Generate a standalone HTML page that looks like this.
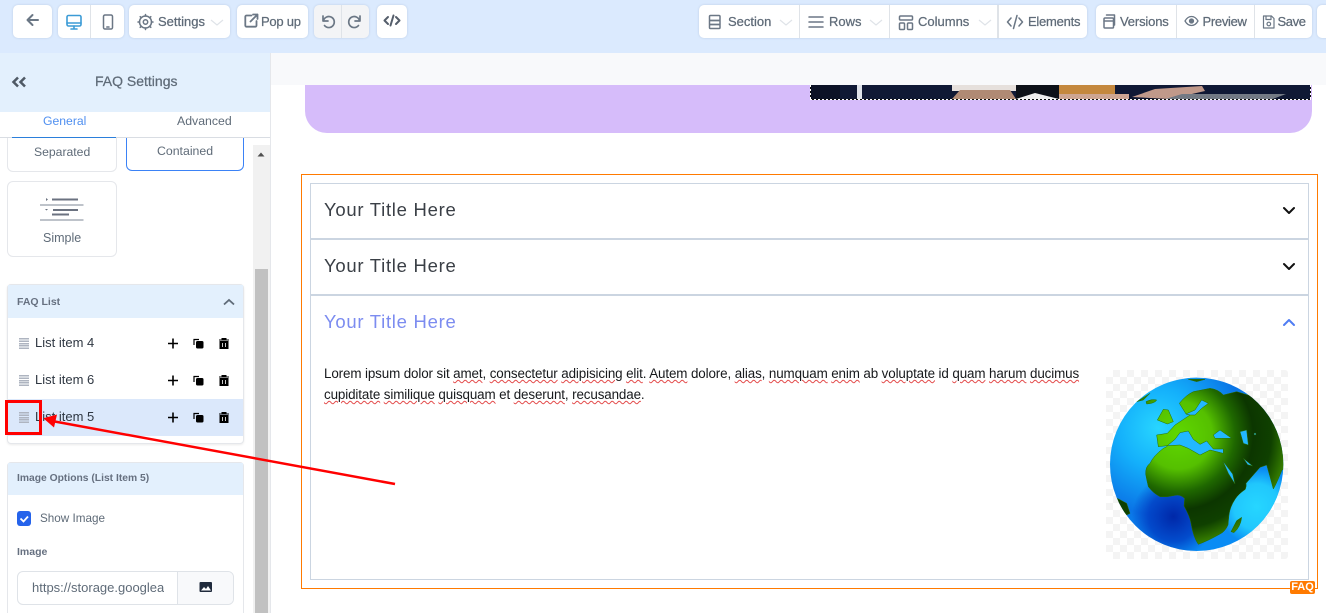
<!DOCTYPE html>
<html><head><meta charset="utf-8"><title>FAQ Settings</title>
<style>
*{box-sizing:border-box}
html,body{margin:0;padding:0;width:1326px;height:613px;overflow:hidden;background:#fff;font-family:"Liberation Sans",sans-serif}
#root{position:relative;width:1326px;height:613px;overflow:hidden;background:#fff}
.a{position:absolute}
.t{position:absolute;white-space:nowrap;line-height:16px;font-size:13px;color:#5f6b78}
.m{-webkit-text-stroke:.25px currentColor}
.btn{position:absolute;top:5px;height:33px;background:#fff;border-radius:5px;box-shadow:0 0 2px rgba(100,120,150,.25)}
.dv{position:absolute;top:5px;height:33px;width:1px;background:#dfe3e8}
svg{position:absolute;overflow:visible}
.ic{fill:none;stroke:#6b7785;stroke-width:1.5;stroke-linecap:round;stroke-linejoin:round}
.card{position:absolute;background:#fff;border:1px solid #e5e7eb;border-radius:6px}
.title{position:absolute;left:324px;font-size:18.5px;line-height:22px;color:#3a3f46;white-space:nowrap;letter-spacing:.72px}
.w{text-decoration:underline wavy #e34a4a 1px;text-underline-offset:1px}
.p{position:absolute;left:324px;font-size:13.4px;line-height:21px;color:#17191c;white-space:nowrap;letter-spacing:-.117px}
.li{position:absolute;left:35px;font-size:13px;line-height:16px;color:#2f3742;white-space:nowrap}
.drag{position:absolute;left:19px;width:10px;height:11px;background:repeating-linear-gradient(#aeb4c0 0 1.5px,transparent 1.5px 2.4px)}
.b{font-weight:bold;color:#667080}
</style></head><body><div id="root">

<!-- toolbar bg -->
<div class="a" style="left:0;top:0;width:1326px;height:53px;background:#dbeafe"></div>
<div class="btn" style="left:13px;width:39px"></div>
<div class="btn" style="left:58px;width:66px"></div><div class="dv" style="left:90px"></div>
<div class="btn" style="left:129px;width:101px"></div>
<div class="btn" style="left:237px;width:71px"></div>
<div class="btn" style="left:314px;width:55px;background:#f3f4f6"></div><div class="dv" style="left:341px"></div>
<div class="btn" style="left:377px;width:30px"></div>
<div class="btn" style="left:699px;width:388px"></div>
<div class="dv" style="left:799px"></div><div class="dv" style="left:889px"></div><div class="dv" style="left:997px;width:2px"></div>
<div class="btn" style="left:1096px;width:216px"></div>
<div class="dv" style="left:1176px"></div><div class="dv" style="left:1254px"></div>
<div class="btn" style="left:1317px;width:20px"></div>

<svg style="left:0;top:0" width="1326" height="53">
 <path class="ic" style="stroke-width:2" d="M38 20H28M32.500 15L27.500 20L32.500 25"/>
 <g class="ic" style="stroke:#3b9bd6;stroke-width:1.600"><rect x="67" y="15.500" width="14" height="10.500" rx="1.500"/><path d="M67 23H81M74 26V28.500M71 29H77"/></g>
 <rect class="ic" x="103.500" y="15" width="9" height="14" rx="1.500"/><path class="ic" d="M106.800 27H109"/>
 <g class="ic"><circle cx="145.500" cy="22" r="2.200"/><circle cx="145.500" cy="22" r="6"/><path d="M145.500 14.500v1.500M145.500 28v1.500M138 22h1.500M151.500 22h1.500M140.200 16.700l1 1M149.800 26.300l1 1M140.200 27.300l1-1M149.800 17.700l1-1"/></g>
 <path d="M211 20l6 5 6-5M780 20l6 5 6-5M870 20l6 5 6-5M979 20l6 5 6-5" fill="none" stroke="#dfe3e8" stroke-width="1.200"/>
 <g class="ic" style="stroke-width:1.800"><path d="M251.500 15.500h-5a1.200 1.200 0 0 0-1.200 1.200v8.800a1.200 1.200 0 0 0 1.200 1.200h8.800a1.200 1.200 0 0 0 1.200-1.200V21"/><path d="M250.500 21.500L257.500 14.500M253 14.500H257.500V19"/></g>
 <g class="ic" style="stroke-width:1.700"><path d="M323 16v5h5M323.500 20.500a5.500 5.500 0 1 1 1 5"/><path d="M360 16v5h-5M359.500 20.500a5.500 5.500 0 1 0-1 5"/></g>
 <g class="ic" style="stroke:#555e6b;stroke-width:2"><path d="M388 17l-3.500 3.500 3.500 3.500M396 17l3.500 3.500L396 24M393.500 15.500l-3 10"/></g>
 <!-- right -->
 <g class="ic"><rect x="709.500" y="15.500" width="10.500" height="5" rx="1"/><rect x="709.500" y="20.500" width="10.500" height="4"/><rect x="709.500" y="24.500" width="10.500" height="4" rx="1"/></g>
 <path class="ic" d="M809 17h14M809 22h14M809 27h14"/>
 <g class="ic"><rect x="899.500" y="16" width="13" height="4" rx="1"/><rect x="899.500" y="23" width="5" height="6.500" rx="1"/><rect x="907.500" y="23" width="5" height="6.500" rx="1"/></g>
 <path class="ic" d="M1011 18l-3.500 4 3.500 4M1019 18l3.500 4-3.500 4M1017 15.500l-3.500 13"/>
 <g class="ic"><rect x="1104" y="18" width="9.500" height="10" rx="1"/><path d="M1104 21h9.500M1106.500 15h8v10"/></g>
 <g class="ic" style="stroke-width:1.300"><path d="M1185 21c2-3.500 4-4.500 6.500-4.500S1196 17.500 1198 21c-2 3.500-4 4.500-6.500 4.500S1187 24.500 1185 21z"/><circle cx="1191.500" cy="21" r="2" fill="#6b7785"/></g>
 <g class="ic" style="stroke-width:1.200"><path d="M1263.500 16h8l2.500 2.500V28h-10.500z"/><path d="M1266 16v3.500h5V16"/><circle cx="1268.800" cy="24" r="1.800"/></g>
</svg>
<div class="t m" style="left:158px;top:14px">Settings</div>
<div class="t m" style="left:261px;top:14px;letter-spacing:-.25px">Pop up</div>
<div class="t m" style="left:728px;top:14px">Section</div>
<div class="t m" style="left:829px;top:14px">Rows</div>
<div class="t m" style="left:918px;top:14px">Columns</div>
<div class="t m" style="left:1028px;top:14px;letter-spacing:-.25px">Elements</div>
<div class="t m" style="left:1120px;top:14px;letter-spacing:-.15px">Versions</div>
<div class="t m" style="left:1202.500px;top:14px;letter-spacing:-.3px">Preview</div>
<div class="t m" style="left:1277.500px;top:14px;letter-spacing:-.4px">Save</div>

<!-- canvas -->
<div class="a" style="left:271px;top:53px;width:1055px;height:32px;background:#f8f9fb"></div>
<div class="a" style="left:305px;top:85px;width:1007px;height:48px;background:#d6bcfa;border-radius:0 0 22px 22px"></div>
<svg style="left:810px;top:85px" width="501" height="15" viewBox="0 0 501 15">
 <rect width="501" height="15" fill="#101935"/>
 <rect x="47" width="5" height="14" fill="#dfe3ea"/>
 <rect x="0" width="30" height="15" fill="#0c1226"/>
 <rect x="142" width="64" height="6" fill="#e6e0dc"/>
 <path d="M142 14L150 5H200L206 14Z" fill="#b08a74"/>
 <rect x="206" width="43" height="15" fill="#0d1118"/>
 <path d="M206 14L225 8L249 14Z" fill="#eeeeee"/>
 <rect x="249" width="56" height="9" fill="#c4883e"/>
 <rect x="249" y="9" width="70" height="6" fill="#cda592"/>
 <path d="M322 12L345 4L392 1L395 6L360 14Z" fill="#c0998a"/>
 <path d="M352 15L372 9H476L460 15Z" fill="#737a84"/>
 <path d="M0 14.500H501M.5 0V14M500.500 0V14" stroke="#0a0a0a" stroke-width="1"/>
 <path d="M0 14.500H501M.5 0V14M500.500 0V14" stroke="#fff" stroke-width="1" stroke-dasharray="2 2"/>
</svg>

<!-- accordion -->
<div class="a" style="left:301px;top:174px;width:1017px;height:1px;background:#ff7a00"></div>
<div class="a" style="left:301px;top:588px;width:1017px;height:1px;background:#ff7a00"></div>
<div class="a" style="left:301px;top:174px;width:1px;height:415px;background:#ff7a00"></div>
<div class="a" style="left:1317px;top:174px;width:1px;height:415px;background:#ff7a00"></div>
<div class="a" style="left:310px;top:183px;width:999px;height:397px;border:1px solid #cbd5e1"></div>
<div class="a" style="left:310px;top:238px;width:999px;height:2px;background:#cbd5e1"></div>
<div class="a" style="left:310px;top:294px;width:999px;height:2px;background:#cbd5e1"></div>
<div class="title" style="top:199px">Your Title Here</div>
<div class="title" style="top:255px">Your Title Here</div>
<div class="title" style="top:311px;color:#7c8cf0">Your Title Here</div>
<svg style="left:0;top:0" width="1326" height="613">
 <path d="M1284 208l5 5 5-5M1284 264l5 5 5-5" fill="none" stroke="#111" stroke-width="2" stroke-linecap="round" stroke-linejoin="round"/>
 <path d="M1284 325l5-5 5 5" fill="none" stroke="#4f7df3" stroke-width="2" stroke-linecap="round" stroke-linejoin="round"/>
</svg>
<div class="p" style="top:363px">Lorem ipsum dolor sit <span class="w">amet</span>, <span class="w">consectetur</span> <span class="w">adipisicing</span> <span class="w">elit</span>. <span class="w">Autem</span> dolore, <span class="w">alias</span>, <span class="w">numquam</span> <span class="w">enim</span> ab <span class="w">voluptate</span> id <span class="w">quam</span> <span class="w">harum</span> <span class="w">ducimus</span></div>
<div class="p" style="top:384px"><span class="w">cupiditate</span> <span class="w">similique</span> <span class="w">quisquam</span> et <span class="w">deserunt</span>, <span class="w">recusandae</span>.</div>

<!-- globe -->
<div class="a" style="left:1106px;top:370px;width:182px;height:189px;border-radius:3px;background:repeating-conic-gradient(#f4f4f4 0 25%,#fff 0 50%) 0 0/14px 14px"></div>
<svg style="left:1080px;top:350px" width="246" height="263" viewBox="0 0 738 789">
 <defs>
  <clipPath id="gc"><circle cx="350" cy="343" r="260"/></clipPath>
  <radialGradient id="o1" gradientUnits="userSpaceOnUse" cx="235" cy="235" r="345"><stop offset="0" stop-color="#28d6ff"/><stop offset=".35" stop-color="#14b0fb"/><stop offset=".75" stop-color="#0a74e6"/><stop offset="1" stop-color="#0a8cf4"/></radialGradient>
  <radialGradient id="o2" gradientUnits="userSpaceOnUse" cx="280" cy="500" r="125"><stop offset="0" stop-color="#0028a8"/><stop offset=".6" stop-color="#0038c0" stop-opacity=".75"/><stop offset="1" stop-color="#0038c0" stop-opacity="0"/></radialGradient>
  <radialGradient id="o3" gradientUnits="userSpaceOnUse" cx="530" cy="470" r="115"><stop offset="0" stop-color="#26d6ff"/><stop offset=".6" stop-color="#26d6ff" stop-opacity=".8"/><stop offset="1" stop-color="#26d6ff" stop-opacity="0"/></radialGradient>
  <radialGradient id="l" gradientUnits="userSpaceOnUse" cx="295" cy="255" r="340"><stop offset="0" stop-color="#60d800"/><stop offset=".3" stop-color="#55c000"/><stop offset=".5" stop-color="#1f6800"/><stop offset=".66" stop-color="#0c3600"/><stop offset=".82" stop-color="#0f4000"/><stop offset="1" stop-color="#3f8c00"/></radialGradient>
 </defs>
 <g clip-path="url(#gc)">
  <rect x="80" y="70" width="540" height="540" fill="url(#o1)"/>
  <rect x="80" y="70" width="540" height="540" fill="url(#o2)"/>
  <rect x="80" y="70" width="540" height="540" fill="url(#o3)"/>
  <g fill="url(#l)" stroke="#2a6a00" stroke-width="1.500" stroke-linejoin="round">
   <path d="M230 255L262 250L285 225L315 205L330 195L318 192L298 160Q318 135 340 125L390 115Q415 118 430 135L470 125L520 140L640 100V340L606 360Q590 400 580 417Q570 380 560 345L540 352L498 400Q500 408 496 418Q475 432 465 448Q450 470 447 495L444 525Q435 545 420 552Q385 572 355 583Q340 562 333 520Q330 500 312 468L314 445Q300 432 285 436Q262 442 240 440Q220 430 205 410Q200 390 197 372Q196 350 210 340Q220 318 250 295Q262 290 262 287L235 290Z"/>
   <path d="M232 210L250 178L265 180L280 215L262 222Z"/>
   <path d="M198 155Q215 146 230 150Q225 160 200 162ZM170 155L210 130L190 150Z"/>
   <path d="M112 445L140 460L150 490L130 500Z"/>
   <path d="M453 545L470 512L485 502Q482 530 462 548Z"/>
   <path d="M325 88L375 88L350 95Z"/>
  </g>
  <g fill="#22b8ff" stroke="#2a6a00" stroke-width="1.500" stroke-linejoin="round">
   <path d="M262 287L285 268L300 248L325 243L340 268L360 283L380 273L400 297L430 297L430 310L390 300L360 315L325 295L300 285Z"/>
   <path d="M318 192L345 180L365 150L385 160L365 175L345 195L330 195Z"/>
   <path d="M400 255L420 240L455 265L425 265L405 265Z"/>
   <path d="M480 245L500 240L505 285L490 280Z"/>
   <path d="M428 332L445 370L465 402L458 372Z"/>
   <path d="M490 325L518 348L503 344Z"/>
   <circle cx="525" cy="252" r="3"/>
  </g>
 </g>
</svg>

<!-- FAQ badge -->
<div class="a" style="left:1290px;top:581px;width:25px;height:13px;background:#ff7a00;border-radius:2px;color:#fff;font-size:11px;line-height:13px;font-weight:bold;text-align:center">FAQ</div>

<!-- sidebar -->
<div class="a" style="left:0;top:53px;width:271px;height:560px;background:#fff;border-right:1px solid #e5e7eb"></div>
<div class="a" style="left:0;top:53px;width:270px;height:59px;background:#e3f0fd"></div>
<svg style="left:0;top:0" width="271" height="140"><path d="M18 77.500l-4.500 4.500 4.500 4.500M25 77.500l-4.500 4.500 4.500 4.500" fill="none" stroke="#4f5965" stroke-width="2.500"/></svg>
<div class="t m" style="left:95px;top:73px;font-size:14px">FAQ Settings</div>
<div class="t" style="left:43px;top:113px;font-size:12.200px;color:#4f8ff0">General</div>
<div class="t" style="left:177px;top:113px;font-size:12.300px">Advanced</div>
<div class="a" style="left:0;top:137px;width:270px;height:1px;background:#d9dde3"></div>
<div class="a" style="left:12px;top:137px;width:104px;height:1px;background:#2b7fdb"></div>

<!-- cards -->
<div class="a" style="left:0;top:138px;width:254px;height:475px;overflow:hidden">
 <div class="card" style="left:7px;top:-40px;width:110px;height:74px"></div>
 <div class="card" style="left:126px;top:-40px;width:118px;height:73px;border-color:#3b82f6"></div>
</div>
<div class="t" style="left:34px;top:144px;font-size:12.200px">Separated</div>
<div class="t" style="left:157px;top:143px;font-size:12.300px">Contained</div>
<div class="card" style="left:7px;top:181px;width:110px;height:76px"></div>
<svg style="left:0;top:0" width="130" height="260"><g fill="none"><path d="M40 205H83.500M40 220H83.500" stroke="#a9afb9" stroke-width="1.500"/><path d="M52 199.500H78M53 210H78M52 214.500H69" stroke="#6b7280" stroke-width="2"/></g><path d="M46 198l2 1.500-2 1.500zM45 209l1.500 1.500 1.500-1.500z" fill="#6b7280"/></svg>
<div class="t" style="left:43px;top:230px;font-size:12.500px">Simple</div>

<!-- scrollbar -->
<div class="a" style="left:253px;top:145px;width:17px;height:468px;background:#f1f1f1"></div>
<div class="a" style="left:255px;top:269px;width:13px;height:344px;background:#c1c1c1"></div>
<svg style="left:0;top:0" width="271" height="165"><path d="M257.500 156.500l3.500-4 3.500 4z" fill="#505050"/></svg>

<!-- FAQ list panel -->
<div class="a" style="left:7px;top:284px;width:237px;height:160px;background:#fff;border:1px solid #e5e7eb;border-radius:4px;box-shadow:0 1px 2px rgba(0,0,0,.08)"></div>
<div class="a" style="left:8px;top:285px;width:235px;height:33px;background:#e3f0fd"></div>
<div class="t b" style="left:17px;top:294px;font-size:10.500px">FAQ List</div>
<div class="a" style="left:8px;top:399px;width:235px;height:37px;background:#dbe8fb"></div>
<div class="drag" style="top:338px"></div><div class="drag" style="top:375px"></div><div class="drag" style="top:412px"></div>
<div class="li" style="top:335px">List item 4</div>
<div class="li" style="top:372px">List item 6</div>
<div class="li" style="top:409px">List item 5</div>
<svg style="left:0;top:0" width="271" height="613">
 <path d="M224 304.500l5-4.500 5 4.500M224 481l5-4.500 5 4.500" fill="none" stroke="#5f6b78" stroke-width="1.800"/>
 <g id="r1">
  <path d="M168 343.500h10M173 338.500v10" stroke="#000" stroke-width="1.600"/>
  <rect x="196" y="341" width="7.500" height="7.500" rx="1.500" fill="#000"/><path d="M194 345v-5.500h5" fill="none" stroke="#000" stroke-width="1.200"/>
  <path d="M219 340h10M222 340v-1.500h4V340M220 341.500h8v7h-8z" fill="#000" stroke="#000" stroke-width="1"/><path d="M222.500 343v4M225.500 343v4" stroke="#fff" stroke-width=".8"/>
 </g>
 <use href="#r1" y="37"/><use href="#r1" y="74"/>
</svg>

<!-- Image options panel -->
<div class="a" style="left:7px;top:462px;width:237px;height:170px;background:#fff;border:1px solid #e5e7eb;border-radius:4px"></div>
<div class="a" style="left:8px;top:463px;width:235px;height:32px;background:#e3f0fd"></div>
<div class="t b" style="left:17px;top:471px;font-size:10.300px">Image Options (List Item 5)</div>
<div class="a" style="left:17px;top:511px;width:14px;height:15px;background:#2563eb;border-radius:3px"></div>
<svg style="left:0;top:0" width="60" height="540"><path d="M20.500 518.500l3 3 4.500-5" fill="none" stroke="#fff" stroke-width="1.800"/></svg>
<div class="t" style="left:40px;top:511px;font-size:11.700px">Show Image</div>
<div class="t b" style="left:17px;top:544px;font-size:10.500px">Image</div>
<div class="a" style="left:17px;top:571px;width:217px;height:34px;background:#fff;border:1px solid #dfe3e8;border-radius:6px"></div>
<div class="a" style="left:177px;top:572px;width:56px;height:32px;background:#f8f9fb;border-left:1px solid #dfe3e8;border-radius:0 5px 5px 0"></div>
<div class="a" style="left:32px;top:579px;width:132px;height:18px;overflow:hidden;font-size:13px;line-height:18px;color:#5f6b78;white-space:nowrap">https://storage.googleapis.com</div>
<svg style="left:0;top:0" width="240" height="600"><rect x="199.500" y="582" width="12.500" height="10" rx="1" fill="#1f2a3c"/><path d="M201 590.500l3-3.500 2 2 2-3 3 4.500z" fill="#fff"/></svg>

<!-- red annotations -->
<div class="a" style="left:5px;top:400px;width:37px;height:35px;border:3px solid #f00"></div>
<svg style="left:0;top:0" width="420" height="500">
 <path d="M395 484L52 421" stroke="#f00" stroke-width="2.500"/>
 <path d="M43.300 418.300L57 414.500L54 427.500Z" fill="#f00"/>
</svg>
</div></body></html>
